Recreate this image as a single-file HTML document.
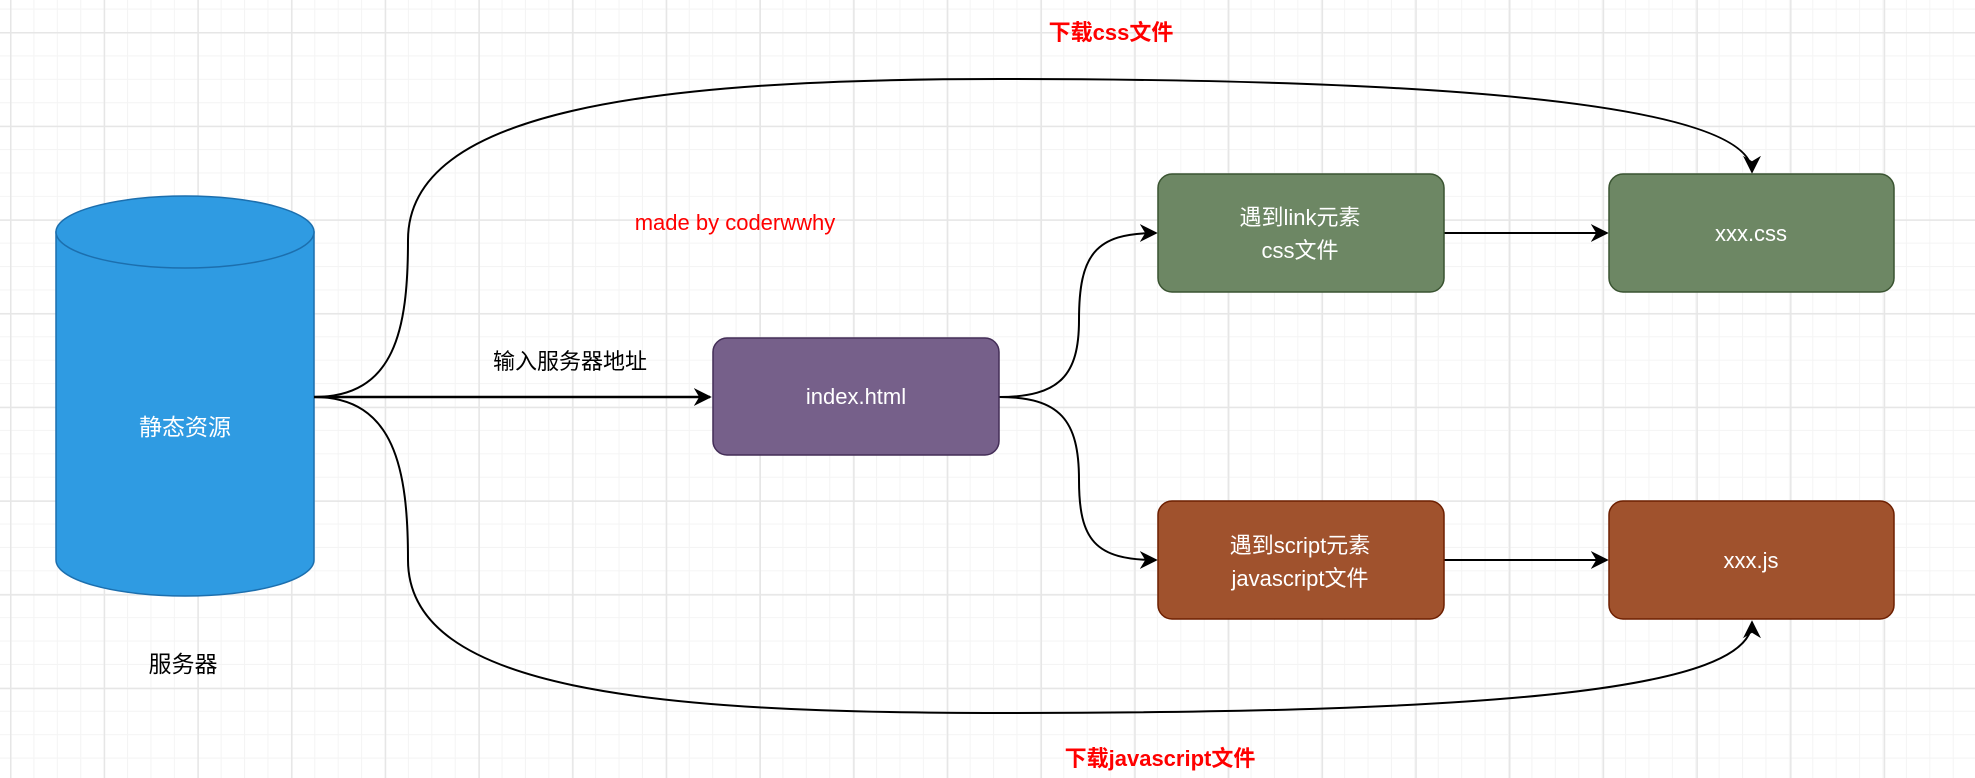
<!DOCTYPE html>
<html><head><meta charset="utf-8"><style>
html,body{margin:0;padding:0;}
body{width:1975px;height:778px;overflow:hidden;background:#fff;
background-image:
linear-gradient(#e6e6e6 1.5px,transparent 1.5px),
linear-gradient(90deg,#e6e6e6 1.5px,transparent 1.5px),
linear-gradient(#f4f4f4 1px,transparent 1px),
linear-gradient(90deg,#f4f4f4 1px,transparent 1px);
background-size:93.7px 93.7px,93.7px 93.7px,23.42px 23.42px,23.42px 23.42px;
background-position:0 32px,10px 0,0 32px,10px 0;
font-family:"Liberation Sans","Noto Sans CJK SC",sans-serif;}
</style></head><body>
<svg width="1975" height="778" style="position:absolute;left:0;top:0" font-family="Liberation Sans, Noto Sans CJK SC, sans-serif">
<defs><marker id="b" viewBox="0 0 10 10" refX="9" refY="5" markerWidth="18" markerHeight="18" markerUnits="userSpaceOnUse" orient="auto"><path d="M0,0 L10,5 L0,10 L3,5 Z" fill="#000"/></marker></defs>
<path d="M56,232 L56,560 A129,36 0 0 0 314,560 L314,232 Z" fill="#2f9be2" stroke="#1c6fae" stroke-width="1.5"/>
<ellipse cx="185" cy="232" rx="129" ry="36" fill="#2f9be2" stroke="#1c6fae" stroke-width="1.5"/>
<text x="185" y="435" text-anchor="middle" font-size="23" fill="#fff">静态资源</text>
<text x="183" y="672" text-anchor="middle" font-size="23" fill="#000">服务器</text>
<g fill="none" stroke="#000" stroke-width="2">
<path d="M314,397 C395,397 408,330 408,240 C408,110 650,79 1000,79 C1500,79 1752,110 1752,172" marker-end="url(#b)"/>
<path d="M314,397 C395,397 408,470 408,560 C408,690 650,713 1000,713 C1500,713 1752,690 1752,622" marker-end="url(#b)"/>
<path d="M314,397 L710,397" stroke-width="2.5" marker-end="url(#b)"/>
<path d="M999,397 C1060,397 1079,375 1079,320 C1079,255 1095,233 1156,233" marker-end="url(#b)"/>
<path d="M999,397 C1060,397 1079,420 1079,480 C1079,540 1095,560 1156,560" marker-end="url(#b)"/>
<path d="M1444,233 L1607,233" marker-end="url(#b)"/>
<path d="M1444,560 L1607,560" marker-end="url(#b)"/>
</g>
<text x="570" y="369" text-anchor="middle" font-size="22" fill="#000">输入服务器地址</text>
<text x="735" y="230" text-anchor="middle" font-size="22" fill="#ff0000">made by coderwwhy</text>
<text x="1111" y="40" text-anchor="middle" font-size="22" font-weight="bold" fill="#ff0000">下载css文件</text>
<text x="1160" y="766" text-anchor="middle" font-size="22" font-weight="bold" fill="#ff0000">下载javascript文件</text>
<rect x="713" y="338" width="286" height="117" rx="14" fill="#76608a" stroke="#432d57" stroke-width="1.5"/>
<text x="856" y="404" text-anchor="middle" font-size="22" fill="#fff">index.html</text>
<rect x="1158" y="174" width="286" height="118" rx="14" fill="#6d8764" stroke="#3a5431" stroke-width="1.5"/>
<text x="1300" y="225" text-anchor="middle" font-size="22" fill="#fff">遇到link元素</text>
<text x="1300" y="258" text-anchor="middle" font-size="22" fill="#fff">css文件</text>
<rect x="1609" y="174" width="285" height="118" rx="14" fill="#6d8764" stroke="#3a5431" stroke-width="1.5"/>
<text x="1751" y="241" text-anchor="middle" font-size="22" fill="#fff">xxx.css</text>
<rect x="1158" y="501" width="286" height="118" rx="14" fill="#a0522d" stroke="#6d1f00" stroke-width="1.5"/>
<text x="1300" y="553" text-anchor="middle" font-size="22" fill="#fff">遇到script元素</text>
<text x="1300" y="586" text-anchor="middle" font-size="22" fill="#fff">javascript文件</text>
<rect x="1609" y="501" width="285" height="118" rx="14" fill="#a0522d" stroke="#6d1f00" stroke-width="1.5"/>
<text x="1751" y="568" text-anchor="middle" font-size="22" fill="#fff">xxx.js</text>
</svg>
</body></html>
